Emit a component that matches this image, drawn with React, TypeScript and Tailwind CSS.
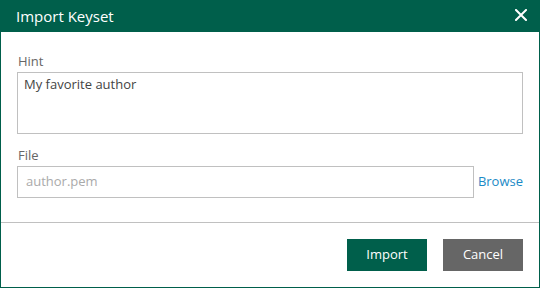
import React from "react";

export default function App() {
  return (
    <div
      className="w-[540px] h-[288px] flex flex-col bg-white border border-t-0 border-[#005f4b] overflow-hidden"
      style={{ fontFamily: '"Open Sans", "Noto Sans", sans-serif' }}
    >
      <div className="h-[32px] -mx-px bg-[#005f4b] flex items-center justify-between pl-[16px] pr-[13px] shrink-0">
        <span className="text-[15px] text-white leading-none">Import Keyset</span>
        <svg width="12" height="12" viewBox="0 0 12 12" className="mt-[-2px]">
          <path d="M1 1 L11 11 M11 1 L1 11" stroke="white" strokeWidth="2" strokeLinecap="square" />
        </svg>
      </div>
      <div className="flex flex-col pl-[16px] pr-[16px] pt-[21px]">
        <label className="text-[13px] leading-[16px] text-[#666] pl-[1px]">Hint</label>
        <div className="mt-[3px] h-[62px] border border-[#c0c0c0] px-[6px] pt-[3px] text-[13px] leading-[16px] text-[#444]">
          My favorite author
        </div>
        <label className="mt-[13px] text-[13px] leading-[16px] text-[#666] pl-[1px]">File</label>
        <div className="mt-[3px] flex items-center">
          <div className="w-[457px] h-[32px] border border-[#c0c0c0] px-[8px] flex items-center text-[13px] text-[#aaa]">
            author.pem
          </div>
          <span className="ml-[4px] text-[13px] text-[#1b8ac6]">Browse</span>
        </div>
      </div>
      <div className="mt-[24px] border-t border-[#c0c0c0]" />
      <div className="flex justify-end gap-[16px] pt-[16px] pr-[16px]">
        <button className="w-[80px] h-[32px] bg-[#005f4b] text-white text-[13px]">Import</button>
        <button className="w-[80px] h-[32px] bg-[#666666] text-white text-[13px]">Cancel</button>
      </div>
    </div>
  );
}
